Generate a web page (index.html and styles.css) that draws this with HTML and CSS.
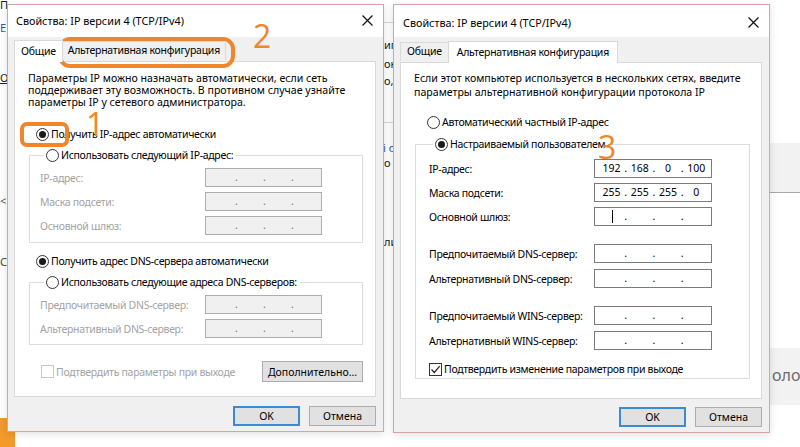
FILE: index.html
```html
<!DOCTYPE html>
<html lang="ru">
<head>
<meta charset="utf-8">
<title>Свойства: IP версии 4 (TCP/IPv4)</title>
<link rel="stylesheet" href="styles.css">
</head>
<body>
<div class="desk">
  <div class="bgwin bg-left">
    <span class="frag f-po">По</span>
    <span class="frag f-e">Е</span>
    <span class="frag f-ot">От</span>
    <span class="frag f-lt">&lt;</span>
    <span class="frag f-c">С</span>
  </div>
  <div class="orange-block"></div>
  <div class="bgwin bg-mid">
    <span class="frag m1">иг</span>
    <span class="frag m2">ок</span>
    <span class="frag m3">о,</span>
    <span class="frag m4">і с</span>
    <span class="frag m5">о г</span>
    <span class="frag m6">ли</span>
  </div>
  <div class="bgwin bg-right">
    <div class="band b1"></div>
    <div class="band b2"><span>оло</span></div>
  </div>

  <!-- Left dialog -->
  <section class="dlg dlg-a">
    <header class="title">
      <span>Свойства: IP версии 4 (TCP/IPv4)</span>
      <svg class="close" viewBox="0 0 10 10" width="11" height="11"><path d="M0.5 0.5L9.5 9.5M9.5 0.5L0.5 9.5" stroke="#111" stroke-width="1.1" fill="none"/></svg>
    </header>
    <nav class="tabs">
      <div class="tab on">Общие</div>
      <div class="tab">Альтернативная конфигурация</div>
    </nav>
    <div class="panel pa">
      <p class="desc">Параметры IP можно назначать автоматически, если сеть<br>поддерживает эту возможность. В противном случае узнайте<br>параметры IP у сетевого администратора.</p>
      <div class="radio on r-a1"><i></i>Получить IP-адрес автоматически</div>
      <fieldset class="grp g-a1">
        <legend><span class="radio"><i></i>Использовать следующий IP-адрес:</span></legend>
        <div class="fields">
          <span class="lbl dis">IP-адрес:</span><div class="ip dis"><span></span><b>.</b><span></span><b>.</b><span></span><b>.</b><span></span></div>
          <span class="lbl dis">Маска подсети:</span><div class="ip dis"><span></span><b>.</b><span></span><b>.</b><span></span><b>.</b><span></span></div>
          <span class="lbl dis">Основной шлюз:</span><div class="ip dis"><span></span><b>.</b><span></span><b>.</b><span></span><b>.</b><span></span></div>
        </div>
      </fieldset>
      <div class="radio on r-a3"><i></i>Получить адрес DNS-сервера автоматически</div>
      <fieldset class="grp g-a2">
        <legend><span class="radio"><i></i>Использовать следующие адреса DNS-серверов:</span></legend>
        <div class="fields">
          <span class="lbl dis">Предпочитаемый DNS-сервер:</span><div class="ip dis"><span></span><b>.</b><span></span><b>.</b><span></span><b>.</b><span></span></div>
          <span class="lbl dis">Альтернативный DNS-сервер:</span><div class="ip dis"><span></span><b>.</b><span></span><b>.</b><span></span><b>.</b><span></span></div>
        </div>
      </fieldset>
      <div class="bottomrow">
        <div class="check dis"><i></i>Подтвердить параметры при выходе</div>
        <button class="btn more">Дополнительно...</button>
      </div>
    </div>
    <div class="btns">
      <button class="btn def">OK</button>
      <button class="btn">Отмена</button>
    </div>
  </section>

  <!-- Right dialog -->
  <section class="dlg dlg-b">
    <header class="title">
      <span>Свойства: IP версии 4 (TCP/IPv4)</span>
      <svg class="close" viewBox="0 0 10 10" width="11" height="11"><path d="M0.5 0.5L9.5 9.5M9.5 0.5L0.5 9.5" stroke="#111" stroke-width="1.1" fill="none"/></svg>
    </header>
    <nav class="tabs tabs-b">
      <div class="tab">Общие</div>
      <div class="tab on">Альтернативная конфигурация</div>
    </nav>
    <div class="panel pb">
      <p class="desc desc-b">Если этот компьютер используется в нескольких сетях, введите<br>параметры альтернативной конфигурации протокола IP</p>
      <div class="radio r-b1"><i></i>Автоматический частный IP-адрес</div>
      <fieldset class="grp g-b1">
        <legend><span class="radio on"><i></i>Настраиваемый пользователем</span></legend>
        <div class="fields">
          <span class="lbl">IP-адрес:</span><div class="ip"><span>192</span><b>.</b><span>168</span><b>.</b><span>0</span><b>.</b><span>100</span></div>
          <span class="lbl">Маска подсети:</span><div class="ip"><span>255</span><b>.</b><span>255</span><b>.</b><span>255</span><b>.</b><span>0</span></div>
          <span class="lbl">Основной шлюз:</span><div class="ip"><span><em class="caret"></em></span><b>.</b><span></span><b>.</b><span></span><b>.</b><span></span></div>
        </div>
        <div class="fields sep">
          <span class="lbl">Предпочитаемый DNS-сервер:</span><div class="ip"><span></span><b>.</b><span></span><b>.</b><span></span><b>.</b><span></span></div>
          <span class="lbl">Альтернативный DNS-сервер:</span><div class="ip"><span></span><b>.</b><span></span><b>.</b><span></span><b>.</b><span></span></div>
        </div>
        <div class="fields sep">
          <span class="lbl">Предпочитаемый WINS-сервер:</span><div class="ip"><span></span><b>.</b><span></span><b>.</b><span></span><b>.</b><span></span></div>
          <span class="lbl">Альтернативный WINS-сервер:</span><div class="ip"><span></span><b>.</b><span></span><b>.</b><span></span><b>.</b><span></span></div>
        </div>
        <div class="check on chk-b"><i><svg viewBox="0 0 11 11" width="11" height="11"><path d="M1.5 5.5L4.3 8.5L9.7 2.2" stroke="#222" stroke-width="1.2" fill="none"/></svg></i>Подтвердить изменение параметров при выходе</div>
      </fieldset>
    </div>
    <div class="btns">
      <button class="btn def">OK</button>
      <button class="btn">Отмена</button>
    </div>
  </section>

  <!-- Annotations -->
  <div class="mark mark-tab"></div>
  <div class="mark mark-radio"></div>
  <span class="num n2">2</span>
  <span class="num n1">1</span>
  <span class="num n3">3</span>
</div>
</body>
</html>
```

FILE: styles.css
```css
* { box-sizing: border-box; }
html, body { margin: 0; padding: 0; }
body {
  width: 800px;
  height: 447px;
  overflow: hidden;
  background: #ffffff;
  font-family: "Noto Sans", "Segoe UI", sans-serif;
  font-size: 10.5px;
  color: #000;
}
.desk { position: relative; width: 800px; height: 447px; }

/* background windows */
.bgwin { position: absolute; }
.bg-left { left: 0; top: 0; width: 8px; height: 447px; background: #fff; overflow: hidden; }
.frag { position: absolute; font-size: 11px; color: #222; white-space: nowrap; }
.f-po { left: 0; top: -3px; }
.f-e { left: 0; top: 20px; color: #2a5caa; }
.f-ot { left: 0; top: 70px; text-decoration: underline; }
.f-lt { left: 0; top: 193px; color: #555; }
.f-c { left: 0; top: 254px; color: #444; }
.orange-block { position: absolute; left: 0; top: 418px; width: 15px; height: 29px; background: #f39a2a; }
.bg-mid { left: 383px; top: 0; width: 11px; height: 447px; background: #fff; overflow: hidden; }
.bg-mid::before { content: ""; position: absolute; left: 0; right: 0; top: 22px; border-top: 1px solid #d8d8d8; }
.bg-mid::after { content: ""; position: absolute; left: 0; right: 0; top: 122px; border-top: 1px solid #d8d8d8; }
.m1 { left: 1px; top: 37px; }
.m2 { left: 1px; top: 56px; }
.m3 { left: 1px; top: 73px; }
.m4 { left: 0; top: 140px; color: #2a5caa; }
.m5 { left: 1px; top: 155px; }
.m6 { left: 1px; top: 234px; }
.bg-right { left: 770px; top: 0; width: 30px; height: 447px; background: #fff; overflow: hidden; }
.band { position: absolute; left: 0; right: 0; background: #f2f2f2; }
.b1 { top: 143px; height: 50px; border-bottom: 1px solid #a8a8a8; }
.b2 { top: 348px; height: 57px; }
.b2 span { position: absolute; left: 2px; top: 16px; font-size: 16px; color: #6a6a6a; }

/* dialogs */
.dlg {
  position: absolute;
  display: flex;
  flex-direction: column;
  background: #f0f0f0;
  border: 1px solid #d9a3a3;
  box-shadow: 0 2px 8px rgba(0,0,0,0.12);
}
.dlg-a { left: 7px; top: 4px; width: 377px; height: 428px; }
.dlg-b { left: 393px; top: 4px; width: 377px; height: 429px; }

.title {
  height: 32px;
  flex: none;
  background: #fff;
  display: flex;
  align-items: center;
  justify-content: space-between;
  padding: 0 10px 2px 8px;
  font-size: 10.8px;
}
.dlg-b .title { padding-top: 2px; padding-bottom: 0; padding-left: 9px; }
.close { display: block; }

.tabs {
  display: flex;
  align-items: flex-end;
  height: 24px;
  padding-left: 6px;
  flex: none;
  position: relative;
  z-index: 2;
}
.tabs-b { height: 25px; }
.tab {
  height: 19px;
  line-height: 17px;
  padding: 0 5px;
  border: 1px solid #d9d9d9;
  border-bottom: none;
  background: #f0f0f0;
  white-space: nowrap;
  margin-bottom: 1px;
  letter-spacing: -0.25px;
}
.tab.on {
  height: 22px;
  line-height: 21px;
  background: #fff;
  margin-bottom: -1px;
  padding: 0 6px;
}
.tabs-b .tab.on { padding: 0 8px; }
.tabs-b .tab:first-child { padding: 0 6px; }
.dlg-a .tab + .tab { border-left: none; }
.dlg-b .tab:first-child { border-right: none; }

.panel {
  flex: none;
  margin: 0 7px 0 6px;
  background: #fff;
  border: 1px solid #d9d9d9;
  position: relative;
}
.pa { height: 336px; padding: 0 12px 0 13px; }
.pb { height: 337px; padding: 0 11px 0 13px; }

.desc { margin: 10px 0 0; line-height: 12px; white-space: nowrap; font-size: 10.6px; }
.desc-b { margin-top: 8px; line-height: 14px; }

.radio {
  display: flex;
  align-items: center;
  height: 16px;
  white-space: nowrap;
  letter-spacing: -0.3px;
}
.radio i {
  width: 13px; height: 13px;
  border: 1px solid #333;
  border-radius: 50%;
  margin-right: 2px;
  display: flex;
  align-items: center;
  justify-content: center;
  flex: none;
  background: #fff;
}
.radio.on i::after {
  content: "";
  width: 7px; height: 7px;
  border-radius: 50%;
  background: #1a1a1a;
}
.r-a1 { margin: 18px 0 0 8px; }
.r-a3 { margin: 10px 0 0 8px; }
.r-b1 { margin: 15px 0 0 13px; }

.grp {
  margin: 5px 0 0 1px;
  padding: 0 0 7px 10px;
  border: 1px solid #dcdcdc;
  min-inline-size: 0;
}
.grp legend { padding: 0 3px 0 2px; margin-left: 4px; }
.g-a1 { padding-bottom: 7px; }
.g-a2 { padding-bottom: 6px; }
.g-b1 { margin: 6px 0 0 1px; padding: 0 0 1px 13px; }

.fields {
  display: grid;
  grid-template-columns: 165px 117px;
  row-gap: 5px;
  align-items: center;
  margin-top: 5px;
}
.g-b1 .fields { grid-template-columns: 165px 118px; margin-top: 7px; }
.g-b1 .fields.sep { margin-top: 18px; row-gap: 6px; }
.lbl { white-space: nowrap; letter-spacing: -0.3px; }
.lbl.dis { color: #a3a3a3; }

.ip {
  height: 19px;
  border: 1px solid #7a7a7a;
  background: #fff;
  display: flex;
  align-items: center;
  padding: 0 2px 0 4px;
}
.ip span { flex: 1; text-align: center; line-height: 17px; position: relative; height: 17px; }
.ip b { font-weight: normal; width: 3px; text-align: center; line-height: 17px; }
.ip.dis { background: #f0f0f0; border-color: #adadad; }
.ip.dis b { color: #6d6d6d; }
.caret { position: absolute; left: 50%; top: 2px; width: 1px; height: 13px; background: #000; }

.bottomrow {
  display: flex;
  justify-content: space-between;
  align-items: center;
  margin: 16px 0 0 13px;
}
.check { display: flex; align-items: center; white-space: nowrap; height: 16px; letter-spacing: -0.3px; }
.check i {
  width: 13px; height: 13px;
  border: 1px solid #333;
  background: #fff;
  margin-right: 2px;
  display: flex; align-items: center; justify-content: center;
  flex: none;
}
.check i svg { display: block; }
.check.dis { color: #a3a3a3; }
.check.dis i { border-color: #c6c6c6; }
.chk-b { margin-top: 11px; }

.btn {
  font-family: inherit;
  font-size: 10.5px;
  color: #000;
  background: #e1e1e1;
  border: 1px solid #adadad;
  height: 20px;
  width: 67px;
  padding: 0;
  margin: 0;
}
.btn.more { width: 101px; height: 21px; }
.btn.def { border: 2px solid #3a8bd6; }
.btns {
  display: flex;
  justify-content: flex-end;
  gap: 9px;
  margin: 9px 7px 0 0;
}
.dlg-b .btns { margin-top: 8px; }

/* annotations */
.mark {
  position: absolute;
  border: 4px solid #f0862c;
  border-radius: 9px;
}
.mark-tab { left: 58px; top: 37px; width: 177px; height: 31px; border-radius: 12px; }
.mark-radio { left: 20px; top: 122px; width: 49px; height: 25px; border-radius: 7px; }
.num {
  position: absolute;
  font-family: "Open Sans", sans-serif;
  color: #f0862c;
  font-size: 32px;
  line-height: 32px;
}
.n2 { left: 253px; top: 20px; }
.n1 { left: 86px; top: 108px; }
.n3 { left: 598px; top: 131px; }
```
